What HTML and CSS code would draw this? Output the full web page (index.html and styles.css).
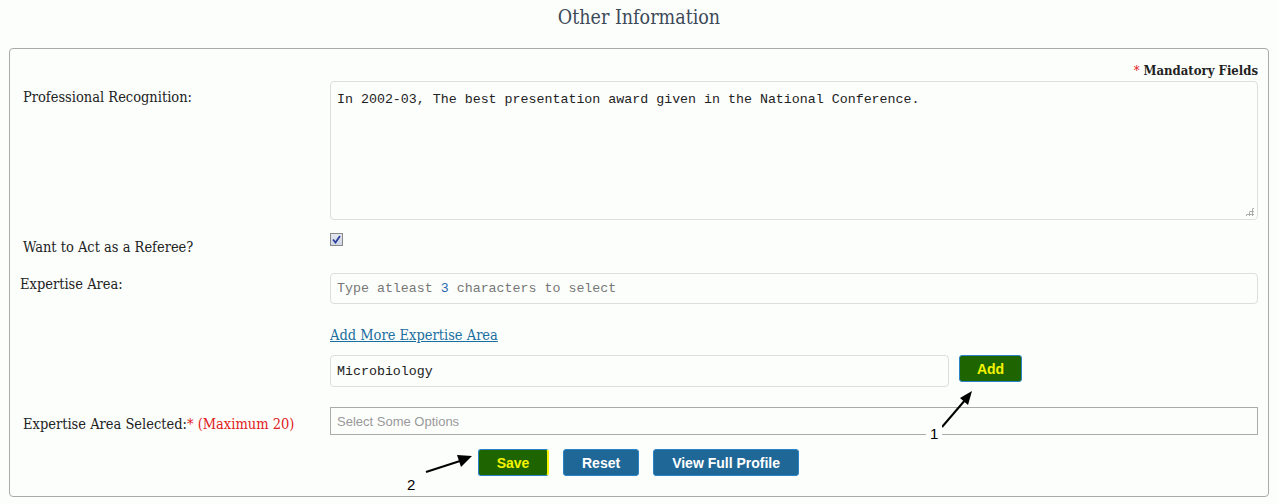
FILE: index.html
```html
<!DOCTYPE html>
<html lang="en">
<head>
  <meta charset="UTF-8" />
  <title>Other Information</title>
  <link rel="stylesheet" href="styles.css">
</head>
<body>
  <h2 class="title">Other Information</h2>

  <div class="panel">
    <div class="mandatory"><span class="req">*</span> Mandatory Fields</div>

    <div class="form">
      <label class="lbl lbl-top">Professional Recognition:</label>
      <div class="field">
        <div class="textarea">In 2002-03, The best presentation award given in the National Conference.<span class="grip"></span></div>
      </div>

      <label class="lbl lbl-ref">Want to Act as a Referee?</label>
      <div class="field">
        <span class="check">
          <svg width="9" height="9" viewBox="0 0 9 9"><path d="M1 4.5 L3.5 7.5 L8 1" fill="none" stroke="#2b3f9a" stroke-width="1.8"/></svg>
        </span>
      </div>

      <label class="lbl lbl-exp">Expertise Area:</label>
      <div class="field">
        <div class="input placeholder">Type atleast <span class="num">3</span> characters to select</div>
      </div>

      <div></div>
      <div class="field">
        <a href="#" class="more">Add More Expertise Area</a>
        <div class="add-row">
          <div class="input small">Microbiology</div>
          <button class="btn green">Add</button>
        </div>
      </div>

      <label class="lbl lbl-sel">Expertise Area Selected:<span class="red">* (Maximum 20)</span></label>
      <div class="field">
        <div class="select">Select Some Options</div>
      </div>
    </div>

    <div class="actions">
      <button class="btn green save">Save</button>
      <button class="btn blue">Reset</button>
      <button class="btn blue">View Full Profile</button>
    </div>

    <!-- annotation arrows -->
    <svg class="arrow arrow1" width="40" height="40" viewBox="0 0 40 40">
      <line x1="2" y1="38" x2="26" y2="10" stroke="#000" stroke-width="2"/>
      <polygon points="32,2 20,9 28,16" fill="#000"/>
    </svg>
    <span class="note note1">1</span>
    <svg class="arrow arrow2" width="52" height="24" viewBox="0 0 52 24">
      <line x1="2" y1="22" x2="36" y2="11" stroke="#000" stroke-width="2"/>
      <polygon points="48,6 33,5 37,17" fill="#000"/>
    </svg>
    <span class="note note2">2</span>
  </div>
</body>
</html>
```

FILE: styles.css
```css
body {
  margin: 0;
  padding: 0 9px;
  background-color: #fcfefc;
  font-family: "DejaVu Serif Condensed", "DejaVu Serif", serif;
  font-stretch: condensed;
  color: #222;
}

.title {
  margin: 0;
  padding-top: 6px;
  height: 48px;
  box-sizing: border-box;
  text-align: center;
  font-weight: normal;
  font-size: 19.5px;
  color: #3d4a58;
}

.panel {
  position: relative;
  border: 1px solid #aaa;
  border-radius: 4px;
  height: 449px;
  box-sizing: border-box;
  padding: 14px 10px 0 13px;
}

.mandatory {
  text-align: right;
  font-weight: bold;
  font-size: 13px;
  color: #222;
  height: 18px;
}

.req, .red {
  color: #e02020;
  font-weight: normal;
}

.form {
  display: grid;
  grid-template-columns: 307px 1fr;
}

.lbl {
  font-size: 14.5px;
  color: #222;
}

.lbl-top { padding-top: 8px; }
.lbl-ref { padding-top: 19px; }
.lbl-exp { padding-top: 21px; margin-left: -3px; }
.lbl-sel { padding-top: 29px; }

.textarea {
  position: relative;
  height: 139px;
  box-sizing: border-box;
  border: 1px solid #ddd;
  border-radius: 4px;
  padding: 10px 6px;
  font-family: "Liberation Mono", monospace;
  font-size: 13.3px;
  color: #222;
}

.grip {
  position: absolute;
  right: 3px;
  bottom: 3px;
  width: 9px;
  height: 9px;
  background:
    radial-gradient(circle, #aaa 1px, transparent 1.2px) 0 0 / 3px 3px;
  clip-path: polygon(100% 0, 100% 100%, 0 100%);
}

.check {
  display: inline-flex;
  align-items: center;
  justify-content: center;
  width: 11px;
  height: 11px;
  margin-top: 13px;
  border: 1px solid #888;
  background: linear-gradient(#e4e8f0, #cfd6e4);
}

.input {
  height: 31px;
  box-sizing: border-box;
  border: 1px solid #ddd;
  border-radius: 4px;
  padding: 0 6px;
  display: flex;
  align-items: center;
  font-family: "Liberation Mono", monospace;
  font-size: 13.3px;
  color: #222;
  white-space: pre;
}

.field .placeholder {
  margin-top: 18px;
  color: #777;
}

.num { color: #2a6ab0; }

.more {
  display: inline-block;
  margin-top: 23px;
  font-size: 14.5px;
  color: #1a6ea0;
}

.add-row {
  display: flex;
  align-items: flex-start;
  gap: 10px;
  margin-top: 11px;
}

.input.small {
  width: 619px;
  height: 32px;
}

.select {
  margin-top: 20px;
  height: 28px;
  box-sizing: border-box;
  border: 1px solid #aaa;
  padding: 0 6px;
  display: flex;
  align-items: center;
  font-family: "Liberation Sans", Arial, sans-serif;
  font-size: 13px;
  color: #999;
}

.btn {
  height: 27px;
  border-radius: 3px;
  border: 1px solid #2a82c8;
  font-family: "Liberation Sans", Arial, sans-serif;
  font-weight: bold;
  font-size: 14px;
  padding: 0 18px;
  cursor: pointer;
}

.btn.green {
  background-color: #1e6400;
  color: #f4f400;
  width: 63px;
  padding: 0;
}

.btn.blue {
  background-color: #1f6796;
  color: #fff;
}

.actions {
  display: flex;
  gap: 14px;
  margin-top: 14px;
  padding-left: 455px;
}

.btn.save {
  width: 71px;
  border-right: 2px solid #f4f400;
}

.arrow {
  position: absolute;
}

.arrow1 { left: 930px; top: 340px; }
.arrow2 { left: 414px; top: 401px; }

.note {
  position: absolute;
  font-family: "Liberation Sans", Arial, sans-serif;
  font-size: 15px;
  color: #000;
  background: #fcfefc;
  padding: 0 4px;
}

.note1 { left: 916px; top: 376px; }
.note2 { left: 393px; top: 427px; }
```
